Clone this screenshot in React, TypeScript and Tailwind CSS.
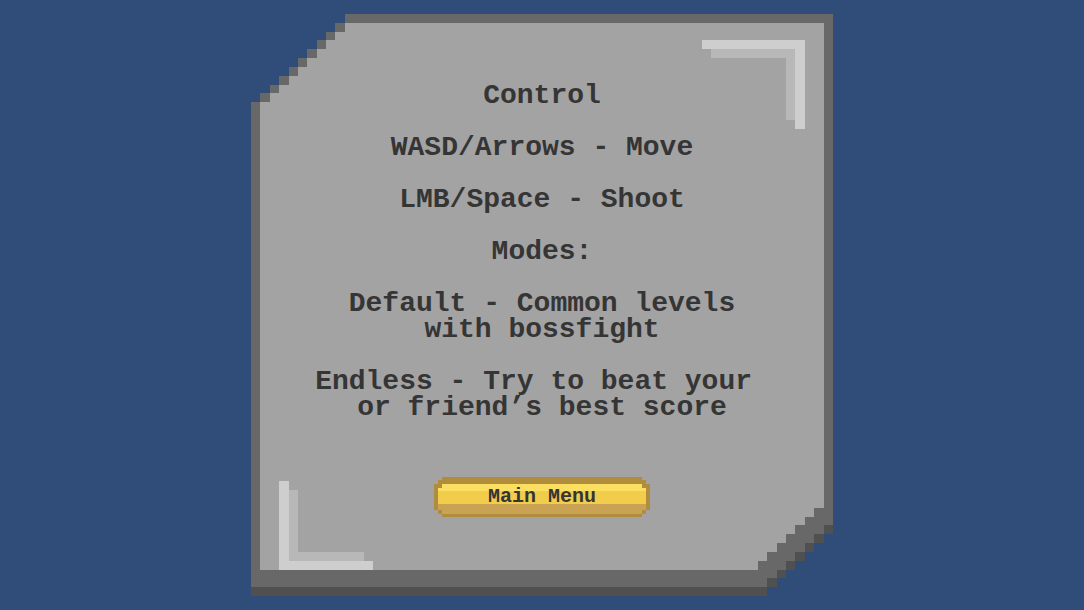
import type { ReactNode } from "react";

const STEPS = [0, 1, 2, 3, 4, 5, 6];

const PanelFrame = () => (
  <svg
    className="col-start-1 row-start-1 h-0 min-h-full w-full"
    viewBox="0 0 62 66"
    preserveAspectRatio="none"
    shapeRendering="crispEdges"
    aria-hidden="true"
  >
    {/* bottom shade */}
    <rect x="0" y="65" width="55" height="1" fill="#505050" />
    {STEPS.map((i) => (
      <rect key={i} x={61 - i} y={58 + i} width="1" height="1" fill="#505050" />
    ))}

    {/* border */}
    <path
      fill="#686868"
      d="M10 0H62V58H61V59H60V60H59V61H58V62H57V63H56V64H55V65H0V10H1V9H2V8H3V7H4V6H5V5H6V4H7V3H8V2H9V1H10Z"
    />

    {/* face */}
    <path
      fill="#a3a3a3"
      d="M10 1H61V56H60V57H59V58H58V59H57V60H56V61H55V62H54V63H1V10H2V9H3V8H4V7H5V6H6V5H7V4H8V3H9V2H10Z"
    />

    {/* corner highlights */}
    <path fill="#b8b8b8" d="M49 4H58V12H57V5H49Z" />
    <path fill="#cecece" d="M48 3H59V13H58V4H48Z" />
    <path fill="#b8b8b8" d="M4 54H5V61H12V62H4Z" />
    <path fill="#cecece" d="M3 53H4V62H13V63H3Z" />
  </svg>
);

const MenuButton = ({ children }: { children: ReactNode }) => (
  <button type="button" className="grid w-[216px] cursor-pointer">
    <svg
      className="col-start-1 row-start-1 h-10 w-full"
      viewBox="0 0 216 40"
      preserveAspectRatio="none"
      shapeRendering="crispEdges"
      aria-hidden="true"
    >
      <path
        fill="#b08d3c"
        d="M8 0H208V3H212V7H216V33H212V37H208V40H8V37H4V33H0V7H4V3H8Z"
      />
      <path fill="#fbdf62" d="M8 7H208V11H212V14H4V11H8Z" />
      <path fill="#f2cc4b" d="M4 14H212V27H4Z" />
      <path fill="#c9a353" d="M4 27H212V33H208V37H8V33H4Z" />
    </svg>
    <span className="col-start-1 row-start-1 self-center text-xl leading-6">
      {children}
    </span>
  </button>
);

const App = () => {
  return (
    <main className="flex min-h-screen items-center justify-center bg-[#304d79] py-[14px] font-['Liberation_Mono',monospace] font-bold text-[#353535]">
      <section className="grid w-full max-w-[582px]">
        <PanelFrame />

        <div className="col-start-1 row-start-1 flex flex-col items-center pt-[69px] pb-[79px]">
          <div className="flex flex-col gap-[26px] text-center text-[28px] leading-[26px] whitespace-pre">
            <h1>Control</h1>
            <p>WASD/Arrows - Move</p>
            <p>LMB/Space - Shoot</p>
            <h2>Modes:</h2>
            <p>
              Default - Common levels
              <br />
              with bossfight
            </p>
            <p>
              {"Endless - Try to beat your "}
              <br />
              or friend’s best score
            </p>
          </div>

          <div className="mt-14">
            <MenuButton>Main Menu</MenuButton>
          </div>
        </div>
      </section>
    </main>
  );
};

export default App;
